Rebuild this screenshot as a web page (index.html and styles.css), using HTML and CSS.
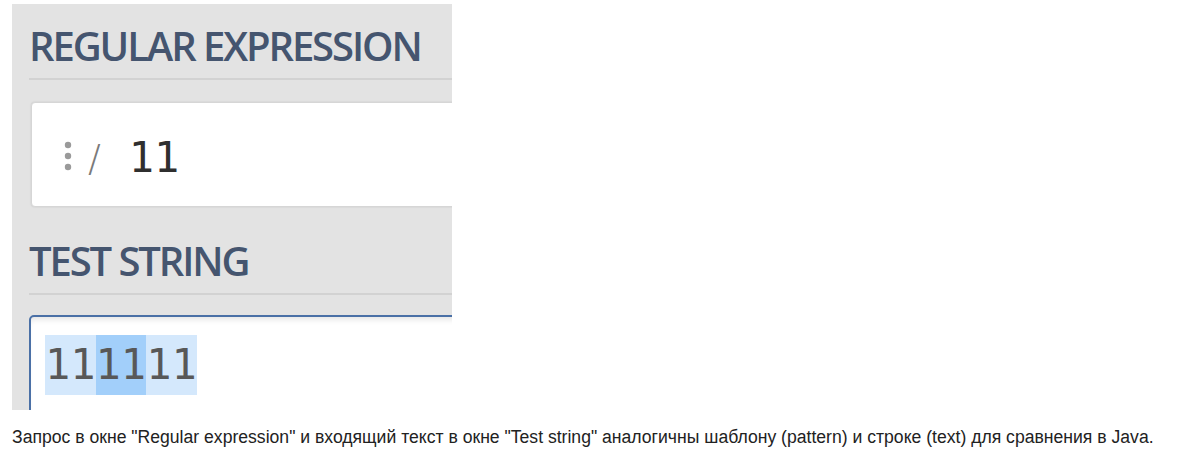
FILE: index.html
```html
<!DOCTYPE html>
<html>
<head>
<meta charset="utf-8">
<link rel="stylesheet" href="styles.css">
</head>
<body>
<div class="shot">
  <h2 class="label label-first">REGULAR EXPRESSION</h2>
  <div class="rule"></div>
  <div class="regex-box">
    <svg class="dots" width="10" height="32" viewBox="0 0 10 32"><circle cx="5" cy="5" r="3.2" fill="#9a9a9a"/><circle cx="5" cy="16" r="3.2" fill="#9a9a9a"/><circle cx="5" cy="27" r="3.2" fill="#9a9a9a"/></svg>
    <span class="slash">/</span>
    <span class="pattern">11</span>
  </div>
  <h2 class="label label-second">TEST STRING</h2>
  <div class="rule"></div>
  <div class="test-box">
    <div class="matches"><span class="m light">11</span><span class="m dark">11</span><span class="m light">11</span></div>
  </div>
</div>
<p class="caption">Запрос в окне "Regular expression" и входящий текст в окне "Test string" аналогичны шаблону (pattern) и строке (text) для сравнения в Java.</p>
</body>
</html>
```

FILE: styles.css
```css
html, body {
  margin: 0;
  padding: 0;
  background: #ffffff;
}
.shot {
  margin: 4px 0 0 12px;
  width: 440px;
  height: 406px;
  box-sizing: border-box;
  padding-left: 17px;
  background: #e3e3e3;
  overflow: hidden;
}
.label {
  margin: 0;
  font-family: "Open Sans", sans-serif;
  font-weight: 600;
  font-size: 40px;
  line-height: 40px;
  letter-spacing: -2.1px;
  color: #45556f;
  white-space: nowrap;
}
.label-first {
  padding-top: 22px;
}
.label-second {
  margin-top: 34px;
}
.rule {
  margin-top: 12px;
  height: 2px;
  width: 600px;
  background: #d2d2d2;
}
.regex-box {
  margin-top: 22px;
  margin-left: 2px;
  width: 600px;
  height: 105px;
  box-sizing: border-box;
  background: #ffffff;
  border: 1px solid #d6d6d6;
  border-radius: 4px;
  box-shadow: 0 0 2px rgba(0,0,0,0.12);
  display: flex;
  align-items: flex-start;
  padding: 34px 0 0 31px;
}
.dots {
  margin-top: 3px;
  flex: none;
}
.slash {
  font-family: "DejaVu Sans", sans-serif;
  font-weight: 300;
  font-size: 38px;
  line-height: 42px;
  color: #7a7a7a;
  margin-left: 15px;
}
.pattern {
  font-family: "DejaVu Sans Mono", monospace;
  font-size: 42px;
  line-height: 42px;
  color: #2f2f2f;
  margin-left: 28px;
}
.test-box {
  margin-top: 20px;
  width: 600px;
  height: 200px;
  box-sizing: border-box;
  background: #ffffff;
  border: 2px solid #4a70a6;
  border-radius: 5px;
  box-shadow: inset 0 6px 6px -4px rgba(0,0,0,0.12);
  padding: 18px 0 0 14px;
}
.matches {
  display: flex;
}
.m {
  display: block;
  height: 60px;
  font-family: "DejaVu Sans Mono", monospace;
  font-size: 42px;
  line-height: 60px;
  color: #585858;
}
.light {
  background: #d4e8fc;
}
.dark {
  background: #a2cffa;
}
.caption {
  margin: 17px 0 0 12px;
  font-family: "Liberation Sans", Arial, sans-serif;
  font-size: 17.6px;
  line-height: 20px;
  color: #222222;
  white-space: nowrap;
}
```
